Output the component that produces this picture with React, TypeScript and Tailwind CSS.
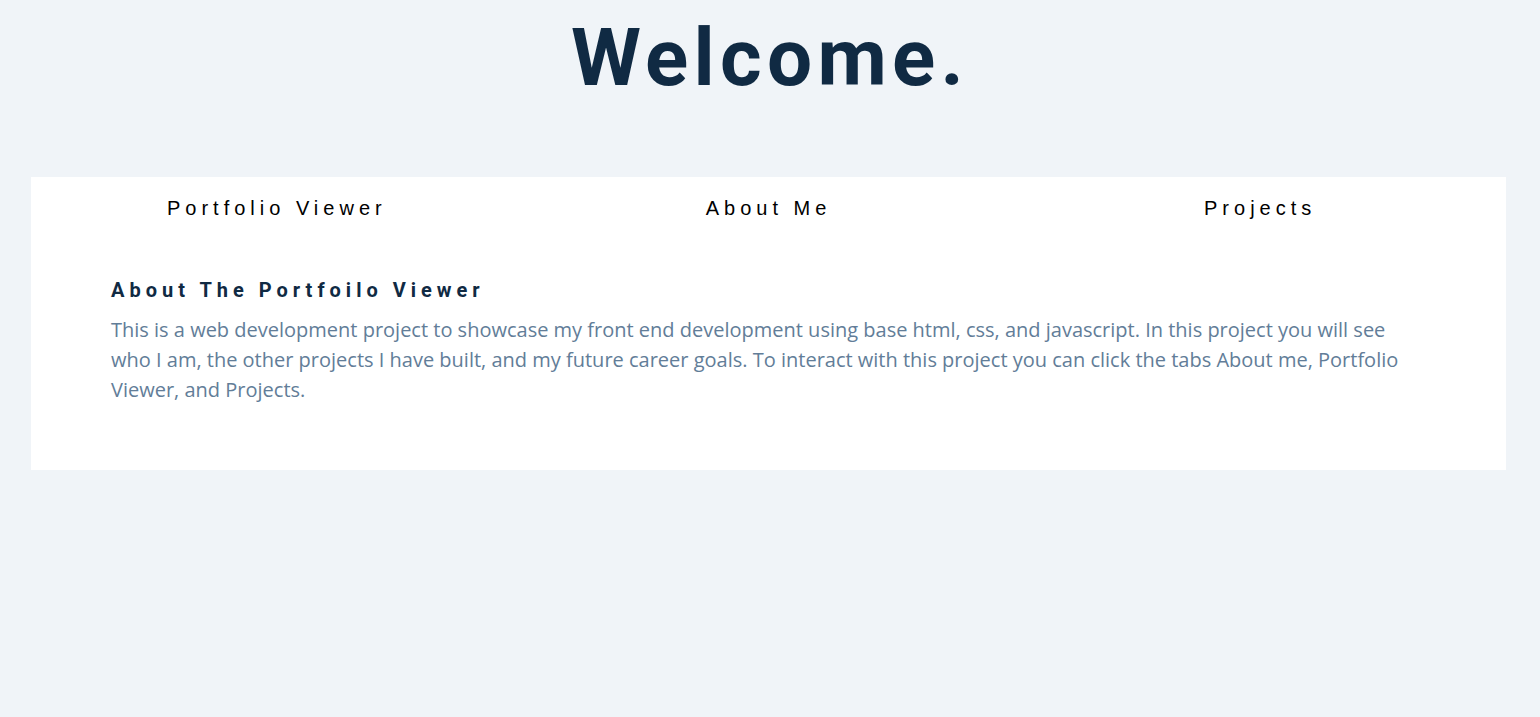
export default function App() {
	return (
		<div className="min-h-[717px] bg-[#f0f4f8] pt-[18px]">
			<h1 className="text-center font-['Roboto',sans-serif] text-[80px] font-bold leading-none tracking-[0.066em] text-[#102a43]">
				Welcome.
			</h1>

			<div className="ml-[31px] mt-[79px] w-[1475px] bg-white">
				<div className="grid grid-cols-3 py-[19px] text-center font-['Liberation_Sans',Arial,sans-serif] text-[20px] leading-[24px] tracking-[0.25em] text-black">
					<div>Portfolio Viewer</div>
					<div>About Me</div>
					<div>Projects</div>
				</div>

				<div className="px-[80px] pt-[37px] pb-[65px]">
					<h3 className="font-['Roboto',sans-serif] text-[20px] font-bold leading-[28px] tracking-[0.25em] text-[#102a43]">
						About The Portfoilo Viewer
					</h3>
					<p className="mt-[11px] font-['Open_Sans',sans-serif] text-[20px] leading-[30px] text-[#627d98]">
						This is a web development project to showcase my front end development using base html, css, and javascript. In this project you will see who I am, the other projects I have built, and my future career goals. To interact with this project you can click the tabs About me, Portfolio Viewer, and Projects.
					</p>
				</div>
			</div>
		</div>
	)
}
